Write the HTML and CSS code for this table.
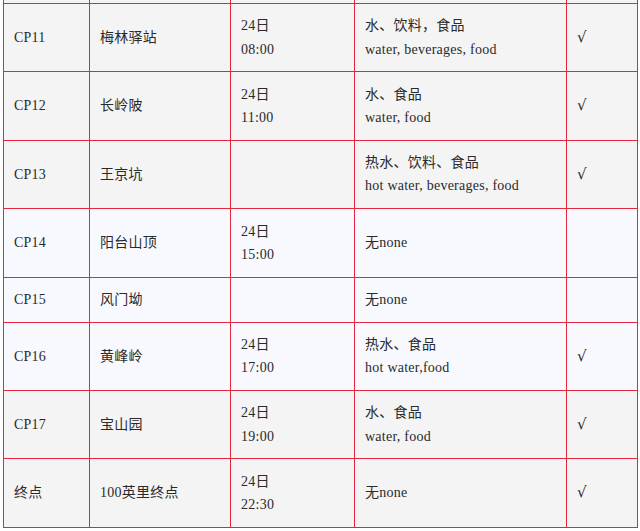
FILE: index.html
```html
<!DOCTYPE html>
<html lang="zh">
<head>
<meta charset="utf-8">
<link rel="stylesheet" href="styles.css">
</head>
<body>
<div class="wrap">
<table class="cp">
  <colgroup>
    <col class="c1"><col class="c2"><col class="c3"><col class="c4"><col class="c5">
  </colgroup>
  <tr class="cut gray"><td></td><td></td><td></td><td></td><td></td></tr>
  <tr class="gray">
    <td>CP11</td><td>梅林驿站</td><td>24日<br>08:00</td><td>水、饮料，食品<br>water, beverages, food</td><td class="ok">√</td>
  </tr>
  <tr class="gray">
    <td>CP12</td><td>长岭陂</td><td>24日<br>11:00</td><td>水、食品<br>water, food</td><td class="ok">√</td>
  </tr>
  <tr class="gray">
    <td>CP13</td><td>王京坑</td><td></td><td>热水、饮料、食品<br>hot water, beverages, food</td><td class="ok">√</td>
  </tr>
  <tr class="blue">
    <td>CP14</td><td>阳台山顶</td><td>24日<br>15:00</td><td>无none</td><td></td>
  </tr>
  <tr class="blue">
    <td>CP15</td><td>风门坳</td><td></td><td>无none</td><td></td>
  </tr>
  <tr class="blue">
    <td>CP16</td><td>黄峰岭</td><td>24日<br>17:00</td><td>热水、食品<br>hot water,food</td><td class="ok">√</td>
  </tr>
  <tr class="gray">
    <td>CP17</td><td>宝山园</td><td>24日<br>19:00</td><td>水、食品<br>water, food</td><td class="ok">√</td>
  </tr>
  <tr class="gray">
    <td>终点</td><td>100英里终点</td><td>24日<br>22:30</td><td>无none</td><td class="ok">√</td>
  </tr>
</table>
</div>
</body>
</html>
```

FILE: styles.css
```css
html, body {
  margin: 0;
  padding: 0;
  background: #ffffff;
}
.wrap {
  padding: 0 3px 0 3px;
  width: 634px;
}
.cp {
  width: 634px;
  border-collapse: collapse;
  table-layout: fixed;
  font-family: "Liberation Serif", "Noto Sans CJK SC", serif;
  font-size: 14px;
  letter-spacing: 0.25px;
  line-height: 23.3px;
  color: #2a2a2a;
}
.c1 { width: 86px; }
.c2 { width: 141px; }
.c3 { width: 124px; }
.c4 { width: 212px; }
.c5 { width: 71px; }
.cp td {
  border: 1px solid #e8243f;
  padding: 10.4px 10px 10.4px 10px;
  vertical-align: middle;
  text-align: left;
}
.cp td.ok {
  font-family: "DejaVu Serif", serif;
  font-size: 15px;
}
.cp tr.cut td {
  border-top: none;
  padding: 0;
  height: 3px;
  line-height: 0;
}
.gray td { background: #f4f4f4; }
.blue td { background: #f7f9fe; }
```
